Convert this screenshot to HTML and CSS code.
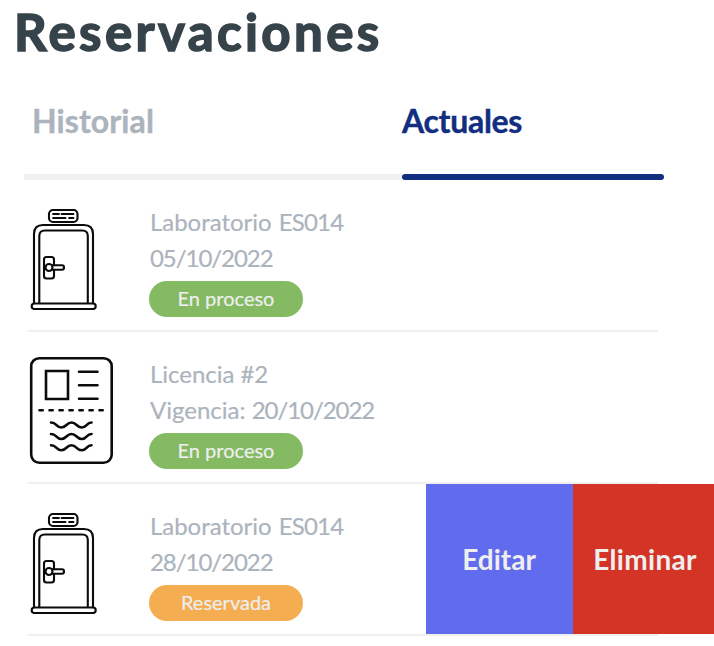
FILE: index.html
```html
<!DOCTYPE html>
<html lang="es">
<head>
<meta charset="utf-8">
<title>Reservaciones</title>
<link rel="stylesheet" href="styles.css">
</head>
<body>
<svg width="0" height="0" class="defs" aria-hidden="true">
  <symbol id="door" viewBox="0 0 90 120">
    <g fill="none" stroke="#0b0b0b" stroke-width="2.100" stroke-linecap="round" stroke-linejoin="round">
      <rect x="29" y="10" width="28.500" height="12" rx="4"/>
      <path stroke-width="1.800" d="M33 14h6M41.500 14h12M33 18h12.500M49 18h4.500"/>
      <path d="M14 103V34q0-9 9-9h41q9 0 9 9v69"/>
      <path d="M19.300 103V36q0-5.500 5.500-5.500h37.500q5.500 0 5.500 5.500v67"/>
      <rect x="11.700" y="103.500" width="64" height="5.500" rx="2.700"/>
      <rect x="24" y="57" width="10" height="21.500" rx="2.500"/>
      <path d="M32 65.300h10q2 0 2 2.200t-2 2.200H32" fill="#fff"/>
      <circle cx="29" cy="67.500" r="3.500" fill="#fff"/>
    </g>
  </symbol>
</svg>
<main>
  <h1>Reservaciones</h1>
  <nav class="tabs">
    <a class="tab"><span class="historial">Historial</span></a>
    <a class="tab active"><span class="actuales">Actuales</span></a>
  </nav>
  <ul class="list">
    <li class="row">
      <svg class="icon" width="90" height="120"><use href="#door"/></svg>
      <div class="info">
        <p class="name">Laboratorio <span class="code">ES014</span></p>
        <p class="date">05/10/2022</p>
        <span class="badge green">En proceso</span>
      </div>
    </li>
    <li class="row">
      <svg class="icon license" width="100" height="120" viewBox="0 0 100 120" fill="none" stroke="#0b0b0b" stroke-width="2.600" stroke-linecap="round" stroke-linejoin="round">
        <rect x="11.200" y="8.200" width="80.500" height="104.500" rx="8"/>
        <path d="M26 21h22v28H26z" stroke-linejoin="miter"/>
        <path d="M59 21.700h18.500M59 35.300h18.500M59 48.800h18.500"/>
        <path d="M19.500 60.300h3.200M29.500 60.300h3.200M39.500 60.300h3.200M49.500 60.300h3.200M59.500 60.300h3.200M69.500 60.300h3.200M79.500 60.300h3.200"/>
        <path id="wave" d="M31 72.500c6 0 5 5 10.300 5s5-5 10.200-5 5 5 10.200 5 4.500-5 9.800-5"/>
        <use href="#wave" y="11.500"/><use href="#wave" y="22.800"/>
      </svg>
      <div class="info">
        <p class="name">Licencia #2</p>
        <p>Vigencia: <span class="date">20/10/2022</span></p>
        <span class="badge green">En proceso</span>
      </div>
    </li>
    <li class="row">
      <svg class="icon" width="90" height="120"><use href="#door"/></svg>
      <div class="info">
        <p class="name">Laboratorio <span class="code">ES014</span></p>
        <p class="date">28/10/2022</p>
        <span class="badge orange">Reservada</span>
      </div>
      <div class="actions">
        <button class="edit">Editar</button>
        <button class="delete">Eliminar</button>
      </div>
    </li>
  </ul>
</main>
</body>
</html>
```
FILE: styles.css
```css
* { box-sizing: border-box; }
body { margin: 0; background: #fff; color: #abb4bd; font-family: Lato, "Liberation Sans", sans-serif; overflow: hidden; }
.defs { display: block; }
h1 { margin: 0; padding-left: 14px; height: 84px; font-size: 51px; line-height: 63px; font-weight: 700; color: #37434b; -webkit-text-stroke: 1.6px #37434b; letter-spacing: 3.4px; white-space: nowrap; }
.tabs { display: grid; grid-template-columns: 378px 262px; margin-left: 24px; height: 96px; }
.tab { display: flex; padding: 18px 0 0 8px; font-size: 32px; line-height: 38px; font-weight: 700; border-bottom: 6px solid #eff0f2; -webkit-text-stroke: .4px; }
.historial { letter-spacing: .1px; }
.actuales { letter-spacing: -.3px; }
.tab.active { position: relative; padding-left: 0; color: #112e80; border: 0; }
.tab.active::after { content: ""; position: absolute; left: 0; right: 0; bottom: 0; height: 6px; border-radius: 3px; background: #112e80; }
.list { list-style: none; margin: 0 0 0 28px; padding: 0; width: 630px; }
.row { position: relative; display: flex; height: 152px; border-bottom: 2px solid #efeff0; }
.icon { flex: none; margin: 20px 0 0 -8px; width: 90px; }
.license { width: 100px; margin-top: 18px; }
.info { flex: none; padding: 24px 0 0 40px; }
.license + .info { padding-left: 30px; }
p { margin: 0; font-size: 24px; line-height: 36px; white-space: nowrap; -webkit-text-stroke: .2px; }
.name { letter-spacing: -.03px; }
.code { margin-left: 1px; letter-spacing: -.8px; }
.date { letter-spacing: -1.05px; }
.badge { display: flex; align-items: center; justify-content: center; margin: 5px 0 0 -1px; padding-bottom: 2px; width: 154px; height: 36px; border-radius: 18px; color: #eee; font-size: 20px; -webkit-text-stroke: .2px; }
.green { background: #84ba62; }
.orange { background: #f4ad50; }
.actions { position: absolute; left: 397.5px; top: -.5px; width: 289px; height: 150.5px; display: flex; }
button { flex: none; border: 0; padding: 0; color: #eee; font: 700 28px Lato, sans-serif; }
.edit { width: 147px; background: #606bed; }
.delete { width: 145px; background: #d43426; letter-spacing: .3px; }
```
